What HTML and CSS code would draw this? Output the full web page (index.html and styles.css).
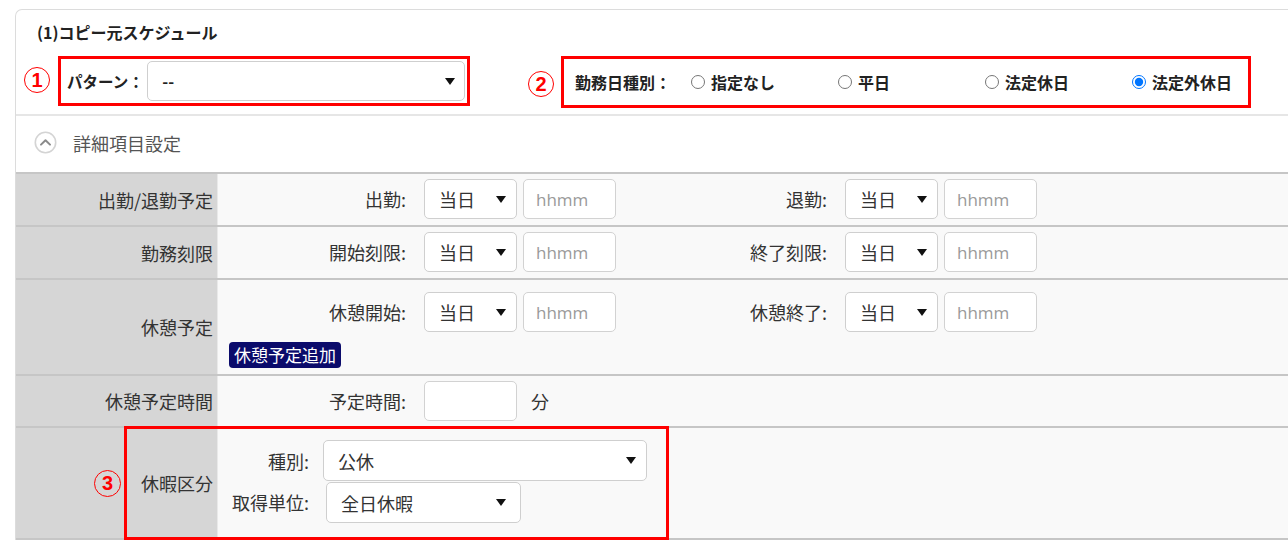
FILE: index.html
```html
<!DOCTYPE html>
<html lang="ja">
<head>
<meta charset="utf-8">
<title>コピー元スケジュール</title>
<link rel="stylesheet" href="styles.css">
</head>
<body>
<div class="card">
  <div class="title">(1)コピー元スケジュール</div>
  <div class="top-row">
    <span class="num n1">1</span>
    <div class="redbox box1">
      <span class="blabel">パターン：</span>
      <div class="select pattern"><span>--</span><i class="caret"></i></div>
    </div>
    <span class="num n2">2</span>
    <div class="redbox box2">
      <span class="blabel klabel">勤務日種別：</span>
      <label class="radio"><input type="radio" name="kinmu"><span>指定なし</span></label>
      <label class="radio"><input type="radio" name="kinmu"><span>平日</span></label>
      <label class="radio"><input type="radio" name="kinmu"><span>法定休日</span></label>
      <label class="radio last"><input type="radio" name="kinmu" checked><span>法定外休日</span></label>
    </div>
  </div>
  <div class="detail-toggle">
    <svg class="chev" width="23" height="23" viewBox="0 0 23 23"><circle cx="11.5" cy="11.5" r="10.2" fill="#fff" stroke="#d4d4d4" stroke-width="1.6"/><path d="M7 13.6 L11.5 9.2 L16 13.6" fill="none" stroke="#8a8a8a" stroke-width="2" stroke-linecap="round" stroke-linejoin="round"/></svg>
    <span>詳細項目設定</span>
  </div>
  <div class="table">
    <div class="row r1">
      <div class="th">出勤/退勤予定</div>
      <div class="td">
        <div class="pairs">
          <div class="group"><span class="glabel">出勤:</span><div class="select day"><span>当日</span><i class="caret"></i></div><div class="input">hhmm</div></div>
          <div class="group"><span class="glabel">退勤:</span><div class="select day"><span>当日</span><i class="caret"></i></div><div class="input">hhmm</div></div>
        </div>
      </div>
    </div>
    <div class="row r2">
      <div class="th">勤務刻限</div>
      <div class="td">
        <div class="pairs">
          <div class="group"><span class="glabel">開始刻限:</span><div class="select day"><span>当日</span><i class="caret"></i></div><div class="input">hhmm</div></div>
          <div class="group"><span class="glabel">終了刻限:</span><div class="select day"><span>当日</span><i class="caret"></i></div><div class="input">hhmm</div></div>
        </div>
      </div>
    </div>
    <div class="row r3">
      <div class="th">休憩予定</div>
      <div class="td">
        <div class="pairs">
          <div class="group"><span class="glabel">休憩開始:</span><div class="select day"><span>当日</span><i class="caret"></i></div><div class="input">hhmm</div></div>
          <div class="group"><span class="glabel">休憩終了:</span><div class="select day"><span>当日</span><i class="caret"></i></div><div class="input">hhmm</div></div>
        </div>
        <div class="btn-row"><span class="btn">休憩予定追加</span></div>
      </div>
    </div>
    <div class="row r4">
      <div class="th">休憩予定時間</div>
      <div class="td">
        <div class="pairs">
          <div class="group"><span class="glabel">予定時間:</span><div class="input blank"></div><span class="unit">分</span></div>
        </div>
      </div>
    </div>
    <div class="row r5">
      <div class="th"><span class="num n3">3</span><span>休暇区分</span></div>
      <div class="td">
        <div class="kline"><span class="klab">種別:</span><div class="select kind"><span>公休</span><i class="caret"></i></div></div>
        <div class="kline"><span class="klab">取得単位:</span><div class="select unitsel"><span>全日休暇</span><i class="caret"></i></div></div>
      </div>
      <div class="redbox box3"></div>
    </div>
    <div class="row r6">
      <div class="th"></div>
      <div class="td"></div>
    </div>
  </div>
</div>
</body>
</html>
```

FILE: styles.css
```css
html, body {
  margin: 0;
  padding: 0;
  background: #ffffff;
  overflow: hidden;
}
body {
  padding: 9px 0 0 15px;
  font-family: "Noto Sans CJK JP", "Noto Sans", sans-serif;
  color: #333;
}
.card {
  width: 1300px;
  border: 1px solid #dcdcdc;
  border-right: none;
  border-bottom: none;
  border-top-left-radius: 7px;
  background: #fff;
  height: 560px;
  box-sizing: border-box;
}
.title {
  font-size: 16px;
  font-weight: 700;
  line-height: 20px;
  padding: 12px 0 0 21px;
  color: #222;
  height: 34px;
  box-sizing: content-box;
}
.top-row {
  display: flex;
  align-items: flex-start;
  height: 58px;
  border-bottom: 2px solid #e6e6e6;
}
.num {
  display: inline-flex;
  align-items: center;
  justify-content: center;
  width: 26px;
  height: 26px;
  border: 1.3px solid #ff0000;
  border-radius: 50%;
  color: #ff0000;
  font-family: "Liberation Sans", Arial, sans-serif;
  font-weight: 700;
  font-size: 20px;
  line-height: 1;
  box-sizing: border-box;
}
.n1 {
  margin: 11px 8px 0 8px;
}
.n2 {
  margin: 15px 7px 0 58px;
}
.redbox {
  border: 3px solid #ff0000;
  box-sizing: border-box;
}
.box1 {
  display: flex;
  align-items: center;
  width: 412px;
  height: 50px;
  padding: 0 2px 0 6px;
}
.blabel {
  font-size: 15.5px;
  font-weight: 700;
  color: #222;
  white-space: nowrap;
}
.box1 .blabel {
  width: 81px;
}
.select {
  display: flex;
  align-items: center;
  justify-content: space-between;
  background: #fff;
  border: 1px solid #cfcfcf;
  border-radius: 5px;
  box-sizing: border-box;
  height: 40px;
  font-size: 18px;
  color: #333;
}
.caret {
  display: block;
  width: 0;
  height: 0;
  border-left: 5px solid transparent;
  border-right: 5px solid transparent;
  border-top: 7px solid #111;
}
.pattern {
  width: 320px;
  padding: 0 9px 0 14px;
  font-size: 16px;
  font-weight: 700;
  color: #222;
}
.box2 {
  display: flex;
  align-items: center;
  width: 690px;
  height: 52px;
  padding-left: 11px;
}
.klabel {
  font-size: 16px;
  width: 116px;
}
.radio {
  display: flex;
  align-items: center;
  width: 147px;
  font-size: 16px;
  font-weight: 700;
  color: #222;
}
.radio.last {
  width: auto;
}
.radio input {
  margin: 0 6px 0 0;
  width: 14px;
  height: 14px;
}
.detail-toggle {
  display: flex;
  align-items: center;
  height: 56px;
  padding: 0 0 3px 18px;
  box-sizing: border-box;
  font-size: 18px;
  color: #555;
}
.chev {
  margin-right: 16px;
}
.table {
  border-top: 2px solid #c6c6c6;
}
.row {
  position: relative;
  display: flex;
  border-bottom: 2px solid #c6c6c6;
  box-sizing: border-box;
}
.th {
  width: 201px;
  flex: none;
  background: #d6d6d6;
  display: flex;
  align-items: center;
  justify-content: flex-end;
  padding-right: 4px;
  box-sizing: border-box;
  font-size: 18px;
  color: #333;
}
.td {
  flex: 1;
  background: #f9f9f9;
  border-left: 1px solid #e9e9e9;
  padding-left: 11px;
  box-sizing: border-box;
}
.r1, .r2 {
  height: 53px;
}
.r1 .td, .r2 .td, .r4 .td {
  padding-top: 5px;
}
.r3 {
  height: 96px;
}
.r3 .td {
  padding-top: 12px;
}
.r4 {
  height: 52px;
}
.r5 {
  height: 112px;
}
.r5 .td {
  padding-top: 12px;
}
.r6 {
  height: 40px;
}
.pairs {
  display: flex;
}
.group {
  display: flex;
  align-items: center;
  width: 421px;
  flex: none;
}
.glabel {
  width: 177px;
  text-align: right;
  margin-right: 18px;
  font-size: 18px;
  color: #333;
}
.day {
  width: 93px;
  padding: 0 10px 0 14px;
}
.input {
  display: flex;
  align-items: center;
  width: 93px;
  height: 40px;
  margin-left: 6px;
  padding-left: 12px;
  border: 1px solid #d2d2d2;
  border-radius: 5px;
  background: #fff;
  box-sizing: border-box;
  font-family: "Open Sans", "Noto Sans", sans-serif;
  font-size: 17px;
  color: #9a9a9a;
}
.input.blank {
  margin-left: 0;
}
.unit {
  margin-left: 14px;
  font-size: 18px;
}
.btn-row {
  margin-top: 10px;
}
.btn {
  display: inline-block;
  background: #0b0b6b;
  color: #fff;
  font-size: 17px;
  line-height: 26px;
  height: 26px;
  padding: 0 5px;
  border-radius: 4px;
}
.n3 {
  margin-right: 20px;
  width: 27px;
  height: 27px;
}
.kline {
  display: flex;
  align-items: center;
}
.klab {
  width: 80px;
  text-align: right;
  font-size: 18px;
  color: #333;
}
.kind {
  width: 324px;
  height: 41px;
  margin-left: 14px;
  padding: 0 10px 0 14px;
}
.unitsel {
  width: 195px;
  height: 41px;
  margin-left: 17px;
  margin-top: 1px;
  padding: 0 14px 0 14px;
}
.box3 {
  position: absolute;
  left: 108px;
  top: -2px;
  width: 545px;
  height: 114px;
}
```
